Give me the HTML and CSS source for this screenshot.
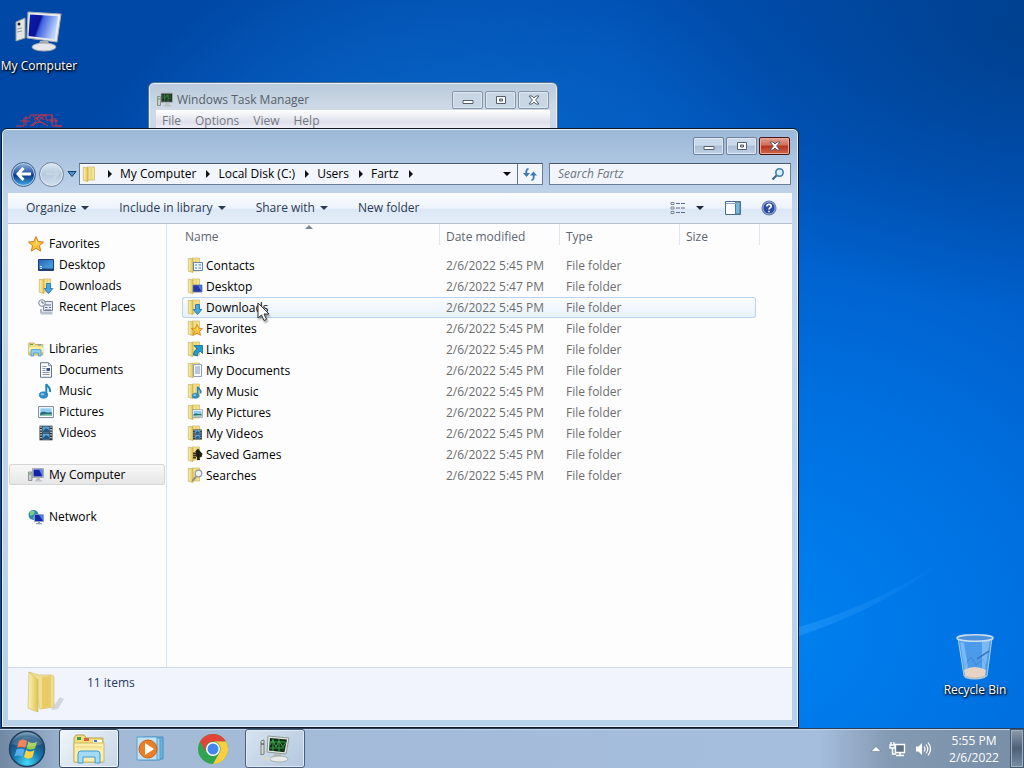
FILE: index.html
```html
<!DOCTYPE html>
<html lang="en">
<head>
<meta charset="utf-8">
<title>Fartz</title>
<link rel="stylesheet" href="styles.css">
</head>
<body>
<svg class="defs" aria-hidden="true">
  <defs>
    <linearGradient id="gold" x1="0" x2="1"><stop offset="0" stop-color="#fbf3b4"/><stop offset="1" stop-color="#e2c352"/></linearGradient>
    <linearGradient id="screen" x1="0" y1="0" x2="1" y2=".3"><stop offset="0" stop-color="#2a45d8"/><stop offset=".12" stop-color="#0b18a8"/><stop offset=".42" stop-color="#0a1496"/><stop offset=".5" stop-color="#3f5fe0"/><stop offset="1" stop-color="#b9d4fb"/></linearGradient>
    <linearGradient id="sky" x1="0" y1="0" x2="1" y2="1"><stop offset="0" stop-color="#2a62b8"/><stop offset="1" stop-color="#4fb0e8"/></linearGradient>
    <symbol id="folder" viewBox="0 0 16 16">
      <path d="M5 1h7.500v13H5z" fill="#f3e38e" stroke="#c9b055" stroke-width=".6"/>
      <path d="M1.300 1.300 6 2v13.500l-4.700-1.200z" fill="url(#gold)" stroke="#bfa34a" stroke-width=".6"/>
      <path d="M9 2v11.500" stroke="#e6cf70"/>
    </symbol>
    <symbol id="arrow-down" viewBox="0 0 16 16"><path d="M8.500 5.500h4v5h2.300l-4.300 5-4.300-5h2.300z" fill="#45a8e4" stroke="#1c6fb0" stroke-width=".8"/></symbol>
    <symbol id="star" viewBox="0 0 16 16"><path d="M8 .6l2.200 5 5.300.5-4 3.600 1.200 5.400L8 12.300l-4.700 2.800 1.200-5.400-4-3.600 5.300-.5z" fill="#fdc43c" stroke="#d27a14" stroke-width="1"/><path d="M8 3l1.300 3.600L8 9z" fill="#fff0a0"/></symbol>
    <symbol id="note" viewBox="0 0 16 16"><ellipse cx="5.500" cy="12" rx="4.200" ry="3.200" fill="#2f92cf" stroke="#1b6ea8" stroke-width=".6"/><path d="M8.300 12V1c1 2.500 4.700 3.200 3.600 8" fill="none" stroke="#2484c2" stroke-width="2"/><ellipse cx="4.500" cy="11.300" rx="1.800" ry="1" fill="#8fd0f0"/></symbol>
    <symbol id="doc" viewBox="0 0 16 16"><path d="M2.500.7h8l3 3v11.600h-11z" fill="#fbfcfe" stroke="#67758a"/><path d="M10.500.7v3h3M4.500 4.500h4M4.500 6.500h3M4.500 8.500h3M4.500 10.500h7M4.500 12.500h7" stroke="#8793a6" fill="none"/><path d="M8.500 6h3.500v3H8.500z" fill="#33518f"/></symbol>
    <symbol id="picture" viewBox="0 0 16 16"><path d="M.6 2.600h14.800v11H.6z" fill="#fff" stroke="#7b8794"/><path d="M2.300 4.300h11.400v7.600H2.300z" fill="#8fcdf0"/><path d="M2.300 9c4-3 6 1 11.400-1v3.900H2.300z" fill="#246a78"/><path d="M2.300 11c4-1 8-1 11.400-.5v1.400H2.300z" fill="#8bc7a9"/></symbol>
    <symbol id="film" viewBox="0 0 16 16"><path d="M1.500.7h13v14.600h-13z" fill="#2c3238"/><path d="M4.500 1.500h7v6h-7zM4.500 8.500h7v6h-7z" fill="#5ba4d6"/><path d="M5 6l3-3 3 2v2H5zM5 13l3-3 3 2v2H5z" fill="#225682"/><path d="M3 1.500v13M13 1.500v13" stroke="#e9eef2" stroke-width="1.400" stroke-dasharray="1.300 1.300"/></symbol>
    <symbol id="monitor" viewBox="0 0 16 16"><path d="M.5 5h3.500v8.500H.5z" fill="#c9ced2" stroke="#6f787f" stroke-width=".7"/><path d="M1 7h2" stroke="#55a54b"/><path d="M4.500 1.500h11v9h-11z" fill="#dfe4ea" stroke="#87909b" stroke-width=".7"/><path d="M5.500 2.500h9v7h-9z" fill="#1422a8"/><path d="M11 2.500h3.500v7z" fill="#6683e6"/><path d="M9 10.500h2.500l.7 2.500H8zM7 13.200h7v1.300H7z" fill="#b8bec8"/></symbol>
    <symbol id="taskmgr" viewBox="0 0 16 16"><path d="M.5 4.500h3v9h-3z" fill="#cbd2c8" stroke="#68736a" stroke-width=".7"/><path d="M1 7h2" stroke="#4ba546"/><path d="M4 1.200h11.500v9H4z" fill="#24342a" stroke="#a6b0ad" stroke-width=".8"/><path d="M5 7l2-2 1 2 2-4 2 4 2-1M5 4h9M7.500 2v8M11 2v8" stroke="#358c40" stroke-width=".6" fill="none"/><path d="M9 10.500h2.500l.7 2.500H8zM6.500 13h8v1.500h-8z" fill="#bac2bd"/></symbol>
    <symbol id="desk" viewBox="0 0 16 16"><path d="M.5 2.500h15v11H.5z" fill="url(#sky)" stroke="#1f3b74"/><path d="M1 11.500h14V13H1z" fill="#203f73"/><path d="M2 9h2v1H2zM2 11h2v1H2z" fill="#d6ebfc"/></symbol>
    <symbol id="dl" viewBox="0 0 16 16"><use href="#folder"/><use href="#arrow-down"/></symbol>
    <symbol id="recent" viewBox="0 0 16 16"><path d="M5.500 2.500h9v9h-9z" fill="#e4e9f2" stroke="#77849b"/><circle cx="4" cy="4" r="3.300" fill="#f5f7fa" stroke="#7b8798"/><path d="M4 2v2h2M7 6h6M7 8.500h2.500M11 8.500h2M7 11h6M3 10v4h11" stroke="#627089" fill="none"/><path d="M2.500 12.500h12v3h-12z" fill="#b8c0cd"/></symbol>
    <symbol id="lib" viewBox="0 0 16 16"><path d="M.8 2h5l1.500 1.500h7.500V14H.8z" fill="#f0dc82" stroke="#b6a04d" stroke-width=".8"/><path d="M2 3.500h3" stroke="#53aa51"/><path d="M10 4h3" stroke="#528dcc"/><path d="M1 6h14v5H1z" fill="#fbefaa"/><path d="M3 15v-5.500q0-1 1-1h8q1 0 1 1V15h-2.500v-3h-5v3z" fill="#8bd0f0" stroke="#4b95c6" stroke-width=".8"/></symbol>
    <symbol id="network" viewBox="0 0 16 16"><circle cx="5.500" cy="6" r="5" fill="#2988b8"/><path d="M2 3c2-2 4-1 5 0L5 6 2 7zM5 8l3-1 1 2-3 2z" fill="#77cf83"/><path d="M6.500 5.500h9v7h-9z" fill="#1028ad" stroke="#97a6c0" stroke-width=".8"/><path d="M11 6h4v6z" fill="#527be5"/><path d="M10 13h2v1h2v1.300H8V14h2z" fill="#8da0b5"/></symbol>
    <symbol id="tri" viewBox="0 0 8 8"><path d="M0 2h8L4 6z" fill="currentColor"/></symbol>
    <symbol id="chev" viewBox="0 0 6 8"><path d="M1 0l4 4-4 4z" fill="#111"/></symbol>
    <symbol id="min" viewBox="0 0 16 12"><path d="M3 6.500h10v3H3z" fill="#fff" stroke="#535d6e"/></symbol>
    <symbol id="max" viewBox="0 0 16 12"><path d="M3.500 2.500h9v7h-9z" fill="#fff" stroke="#535d6e"/><path d="M6.500 5h3v2h-3z" fill="#bdc9da" stroke="#535d6e"/></symbol>
    <symbol id="close" viewBox="0 0 16 12"><path d="M3 2h3l2 2 2-2h3l-3.400 4L13 10h-3L8 8l-2 2H3l3.400-4z" fill="#fff" stroke="#535d6e"/></symbol>
  </defs>
</svg>
<main class="desktop">
  <svg class="streaks" viewBox="0 0 1024 768" preserveAspectRatio="none" aria-hidden="true"><defs><linearGradient id="ray"><stop offset="0" stop-color="#4ab0ff" stop-opacity=".35"/><stop offset="1" stop-color="#4ab0ff" stop-opacity="0"/></linearGradient></defs><path d="M780 632Q870 610 950 556 880 612 780 642z" fill="url(#ray)"/></svg>

  <a class="shortcut computer" href="#computer">
    <svg width="48" height="48" viewBox="0 0 48 48"><path d="M1 13l9-4v20l-9 3z" fill="#e4e5e3" stroke="#9a9d9d"/><circle cx="4" cy="15" r="1.500" fill="#222"/><path d="M2 20l5-1M2 23l5-1" stroke="#999"/><path d="M13 3l33 2-4 28-30-4z" fill="#e9ebee" stroke="#a5abb4"/><path d="M15 5.500l28 1.700-3.500 23L13.500 27z" fill="url(#screen)"/><path d="M25 32h8l2 5H23z" fill="#aaafb7"/><ellipse cx="29" cy="38" rx="12" ry="4" fill="#e5e7ea" stroke="#a2a7ae"/></svg>
    <span>My Computer</span>
  </a>
  <div class="shortcut hidden-app">
    <svg width="46" height="30" viewBox="0 0 46 30" fill="none" stroke="#c0344c" stroke-width="1"><path d="M0 14h8V6h6V3h22v4h4v7h6M16 14L24 3h6v5h6v6h10M10 4v10M36 2v9M4 9h10M17 4l12 9M29 3L17 14M34 9h8M18 8q5-6 10 0M14 14q9-8 18 0"/></svg>
  </div>
  <a class="shortcut bin" href="#bin">
    <svg width="48" height="48" viewBox="0 0 48 48"><path d="M7 5h34l-5 38q-12 5-23 0z" fill="#8abcf0" fill-opacity=".55" stroke="#a5cef4"/><path d="M13 37q10-6 22 0l-1 6q-10 4-20 0z" fill="#e6d3c4"/><path d="M14 32l6-8 5 8 7-6 3 7" fill="none" stroke="#3d7bc0" opacity=".7"/><path d="M31 7h8l-5 30h-3zM9 9l4 1 4 24-3 5z" fill="#d8edff" opacity=".35"/><path d="M26 26l12-8" stroke="#326bb6" stroke-width="1.500"/><ellipse cx="24" cy="5" rx="18" ry="3.200" fill="#4d92dc" stroke="#c9dcee" stroke-width="1.500"/><path d="M13 42q11 5 22 0l-1 3q-10 3-20 0z" fill="#b9c3cc"/></svg>
    <span>Recycle Bin</span>
  </a>

  <section class="window taskmgr">
    <header class="caption">
      <svg width="16" height="16"><use href="#taskmgr"/></svg>
      <h2>Windows Task Manager</h2>
      <div class="controls">
        <button aria-label="Minimize"><svg width="16" height="12"><use href="#min"/></svg></button>
        <button aria-label="Maximize"><svg width="16" height="12"><use href="#max"/></svg></button>
        <button aria-label="Close"><svg width="16" height="12"><use href="#close"/></svg></button>
      </div>
    </header>
    <nav class="menubar"><button>File</button><button>Options</button><button>View</button><button>Help</button></nav>
  </section>

  <section class="window explorer">
    <header class="titlebar">
      <div class="controls">
        <button aria-label="Minimize"><svg width="16" height="12"><use href="#min"/></svg></button>
        <button aria-label="Maximize"><svg width="16" height="12"><use href="#max"/></svg></button>
        <button class="shut" aria-label="Close"><svg width="16" height="12"><use href="#close"/></svg></button>
      </div>
    </header>
    <div class="navrow">
      <div class="travel">
        <button aria-label="Back" class="round back"><svg width="16" height="14" viewBox="0 0 16 14"><path d="M7.500 1 2 7l5.500 6M2.500 7H15" fill="none" stroke="#fff" stroke-width="3"/></svg></button>
        <button aria-label="Forward" class="round forward"><svg width="16" height="14" viewBox="0 0 16 14"><path d="M8.500 1 14 7l-5.500 6M13.500 7H2" fill="none" stroke="#c7d6e6" stroke-width="2"/></svg></button>
        <button aria-label="Recent pages" class="recent"><svg width="10" height="8" viewBox="0 0 10 8"><path d="M1 1.500h8l-4 5z" fill="#4b93d5" stroke="#1b3e6b"/></svg></button>
      </div>
      <div class="address">
        <svg width="16" height="16"><use href="#folder"/></svg>
        <svg class="chev" width="6" height="8"><use href="#chev"/></svg><a href="#pc">My Computer</a>
        <svg class="chev" width="6" height="8"><use href="#chev"/></svg><a href="#c">Local Disk (C:)</a>
        <svg class="chev" width="6" height="8"><use href="#chev"/></svg><a href="#users">Users</a>
        <svg class="chev" width="6" height="8"><use href="#chev"/></svg><a href="#fartz">Fartz</a>
        <svg class="chev" width="6" height="8"><use href="#chev"/></svg>
        <button class="history" aria-label="Previous locations"><svg width="8" height="8"><use href="#tri"/></svg></button>
        <button class="refresh" aria-label="Refresh"><svg width="16" height="16" viewBox="0 0 16 16"><path d="M6.500 3Q3.500 3 4.500 8M9.500 14q3 0 2-5" fill="none" stroke="#3c78b4" stroke-width="1.800"/><path d="M1 7h7l-3.500 4zM8 9.500h7l-3.500-4z" fill="#3c78b4"/></svg></button>
      </div>
      <label class="search"><input type="text" placeholder="Search Fartz" aria-label="Search Fartz"><svg width="14" height="14" viewBox="0 0 14 14"><circle cx="8.500" cy="5.500" r="3.700" fill="#d8f0fc" stroke="#3f7cae" stroke-width="1.600"/><path d="M5.500 8.500l-4 4" stroke="#41658e" stroke-width="2.200"/></svg></label>
    </div>
    <div class="client">
      <div class="toolbar">
        <button>Organize <svg width="8" height="8"><use href="#tri"/></svg></button>
        <button>Include in library <svg width="8" height="8"><use href="#tri"/></svg></button>
        <button>Share with <svg width="8" height="8"><use href="#tri"/></svg></button>
        <button>New folder</button>
        <div class="tools">
          <button aria-label="Change view"><svg width="16" height="14" viewBox="0 0 16 14"><path d="M1 1.500h3v2H1zM1 6h3v2H1zM1 10.500h3v2H1z" fill="#fff" stroke="#7a8494"/><path d="M6 2.500h9M6 7h9M6 11.500h9" stroke="#5b6d8e" stroke-dasharray="4 1"/></svg></button>
          <button aria-label="More view options"><svg width="8" height="8"><use href="#tri"/></svg></button>
          <button class="pane" aria-label="Preview pane"><svg width="16" height="14" viewBox="0 0 16 14"><path d="M.5.5h15v13H.5z" fill="#fff" stroke="#4a6c91"/><path d="M10.500 1h4.500v12h-4.500z" fill="#72b9dc" stroke="#487aa2"/><path d="M1 2.500h14" stroke="#93a8bd"/></svg></button>
          <button aria-label="Help"><svg width="16" height="16" viewBox="0 0 16 16"><circle cx="8" cy="8" r="7.500" fill="#6980b4"/><circle cx="8" cy="8" r="6" fill="#2a4aa6" stroke="#b4c3e4" stroke-width=".7"/><path d="M5.800 6.500c0-3 4.400-2.700 4.400-.3C10.200 7.800 8 7.700 8 9.500M8 10.800V12.300" fill="none" stroke="#fff" stroke-width="1.600"/></svg></button>
        </div>
      </div>
      <div class="body">
        <nav class="sidebar">
          <ul>
            <li><a href="#fav"><svg width="16" height="16"><use href="#star"/></svg>Favorites</a></li>
            <li class="sub"><a href="#desk"><svg width="16" height="16"><use href="#desk"/></svg>Desktop</a></li>
            <li class="sub"><a href="#dl"><svg width="16" height="16"><use href="#dl"/></svg>Downloads</a></li>
            <li class="sub"><a href="#rec"><svg width="16" height="16"><use href="#recent"/></svg>Recent Places</a></li>
          </ul>
          <ul>
            <li><a href="#lib"><svg width="16" height="16"><use href="#lib"/></svg>Libraries</a></li>
            <li class="sub"><a href="#docs"><svg width="16" height="16"><use href="#doc"/></svg>Documents</a></li>
            <li class="sub"><a href="#music"><svg width="16" height="16"><use href="#note"/></svg>Music</a></li>
            <li class="sub"><a href="#pics"><svg width="16" height="16"><use href="#picture"/></svg>Pictures</a></li>
            <li class="sub"><a href="#vids"><svg width="16" height="16"><use href="#film"/></svg>Videos</a></li>
          </ul>
          <ul><li class="current"><a href="#pc"><svg width="16" height="16"><use href="#monitor"/></svg>My Computer</a></li></ul>
          <ul><li><a href="#net"><svg width="16" height="16"><use href="#network"/></svg>Network</a></li></ul>
        </nav>
        <div class="files">
          <table>
            <colgroup><col><col class="c-date"><col class="c-type"><col class="c-size"><col class="c-end"></colgroup>
            <thead><tr><th class="sorted">Name<svg width="8" height="4" viewBox="0 0 8 4"><path d="M0 4l4-4 4 4z" fill="#7b8794"/></svg></th><th>Date modified</th><th>Type</th><th colspan="2">Size</th></tr></thead>
            <tbody>
              <tr><td><svg width="16" height="16" viewBox="0 0 16 16"><use href="#folder"/><path d="M6.500 5.500h9v8h-9z" fill="#eef5fc" stroke="#6685ae"/><path d="M8 8h2M8 11h2M11.500 8H14M11.500 11H14" stroke="#4e80bc"/></svg>Contacts</td><td>2/6/2022 5:45 PM</td><td>File folder</td><td></td></tr>
              <tr><td><svg width="16" height="16" viewBox="0 0 16 16"><use href="#folder"/><path d="M6 7h9v7H6z" fill="#2238a8" stroke="#6d7fb0" stroke-width=".8"/><path d="M11 7.500h3.500v6z" fill="#5877d8"/></svg>Desktop</td><td>2/6/2022 5:47 PM</td><td>File folder</td><td></td></tr>
              <tr class="hot"><td><svg width="16" height="16"><use href="#dl"/></svg>Downloads</td><td>2/6/2022 5:45 PM</td><td>File folder</td><td></td></tr>
              <tr><td><svg width="16" height="16" viewBox="0 0 16 16"><use href="#folder"/><use href="#star" x="4" y="4" width="12" height="12"/></svg>Favorites</td><td>2/6/2022 5:45 PM</td><td>File folder</td><td></td></tr>
              <tr><td><svg width="16" height="16" viewBox="0 0 16 16"><use href="#folder"/><path d="M7 4.500h8.500v8L13 10q-3 2-2.500 5l-4-1Q6 10 10 8z" fill="#229bd0" stroke="#136b9d" stroke-width=".8"/></svg>Links</td><td>2/6/2022 5:45 PM</td><td>File folder</td><td></td></tr>
              <tr><td><svg width="16" height="16" viewBox="0 0 16 16"><use href="#folder"/><path d="M6.500 2.500h8v12h-8z" fill="#f5f8fc" stroke="#92a0b4"/><path d="M8 5h5M8 7h5M8 9h5M8 11h5" stroke="#7f98bc"/></svg>My Documents</td><td>2/6/2022 5:45 PM</td><td>File folder</td><td></td></tr>
              <tr><td><svg width="16" height="16" viewBox="0 0 16 16"><use href="#folder"/><use href="#note" x="4" y="3" width="13" height="13"/></svg>My Music</td><td>2/6/2022 5:45 PM</td><td>File folder</td><td></td></tr>
              <tr><td><svg width="16" height="16" viewBox="0 0 16 16"><use href="#folder"/><use href="#picture" x="5" y="4" width="11" height="11"/></svg>My Pictures</td><td>2/6/2022 5:45 PM</td><td>File folder</td><td></td></tr>
              <tr><td><svg width="16" height="16" viewBox="0 0 16 16"><use href="#folder"/><use href="#film" x="5" y="4" width="11" height="11"/></svg>My Videos</td><td>2/6/2022 5:45 PM</td><td>File folder</td><td></td></tr>
              <tr><td><svg width="16" height="16" viewBox="0 0 16 16"><use href="#folder"/><path d="M11 2.500l2 2.500 2.500 3-1 3-2 .5.5 2.500h-3v-3l-2-1 .5-5z" fill="#1f1b16"/><path d="M6 6h3v7H6z" fill="#8b7a45"/><path d="M6 7.500h3M6 9.500h3M6 11.500h3" stroke="#3b3220"/></svg>Saved Games</td><td>2/6/2022 5:45 PM</td><td>File folder</td><td></td></tr>
              <tr><td><svg width="16" height="16" viewBox="0 0 16 16"><use href="#folder"/><circle cx="11.500" cy="6.500" r="3.300" fill="#edf3f6" stroke="#9099a1" stroke-width="1.200"/><path d="M9 9.500l-3.500 4.500" stroke="#8b8d84" stroke-width="2"/></svg>Searches</td><td>2/6/2022 5:45 PM</td><td>File folder</td><td></td></tr>
            </tbody>
          </table>
          <svg class="cursor" width="13" height="20" viewBox="0 0 13 20"><path d="M1 1v15l3.500-3 2.500 5.500 2.500-1.200L7 12h5z" fill="#fff" stroke="#333"/></svg>
        </div>
      </div>
      <footer class="details">
        <svg width="42" height="42" viewBox="0 0 42 42"><path d="M26 36l7-10 4 2-6 10-7 1z" fill="#999fa8" opacity=".35"/><path d="M2 1l10 3 12 0q3 0 3 3v29l-14 2z" fill="#f0df93" stroke="#d2bb66" stroke-width=".6"/><path d="M15 6l9-1v31l-9 2z" fill="#e9cc68"/><path d="M2 1l9 8v32L1 37z" fill="url(#gold)" stroke="#cbb15a" stroke-width=".6"/></svg>
        <span>11 items</span>
      </footer>
    </div>
  </section>

  <footer class="taskbar">
    <button class="start" aria-label="Start"><svg width="38" height="38" viewBox="0 0 38 38"><defs><radialGradient id="orb" cx=".5" cy=".9" r=".9"><stop offset="0" stop-color="#42dcf8"/><stop offset=".45" stop-color="#1675ae"/><stop offset=".75" stop-color="#1c4d7c"/><stop offset="1" stop-color="#8fb5cc"/></radialGradient></defs><circle cx="19" cy="19" r="17.500" fill="url(#orb)" stroke="#243f5b" stroke-width="1.500"/><path d="M11 11q4-3 8 0l-2 7q-4-2-8 0z" fill="#f26a32"/><path d="M20.500 11.500q4 3 8.500 0l-2 7q-4 2-8.500 0z" fill="#9bcb45"/><path d="M8.500 19.500q4-2 8 0l-2 7q-4-2-8 0z" fill="#54aef0"/><path d="M18 20q4 3 8.500 0l-2 7q-4 3-8.500 0z" fill="#fcd142"/><path d="M4 14Q19 0 34 14 19 20 4 14z" fill="#fff" opacity=".18"/></svg></button>
    <button class="task active" aria-label="Windows Explorer"><svg width="34" height="32" viewBox="0 0 34 32"><path d="M2 5l2-3h8l2 3h17v24H2z" fill="#f1dc7e" stroke="#baa352"/><path d="M5 4h4v3H5z" fill="#3b9c4a"/><path d="M12 5h5v3h-5z" fill="#d8603d"/><path d="M21 7h9v3h-9z" fill="#fff"/><path d="M22 7h3v2h-3z" fill="#3a7cc9"/><path d="M2 10h30v19H2z" fill="#fbeeaa" stroke="#d0b865"/><path d="M4 14h26" stroke="#e5cf7d"/><path d="M6 30V21q0-3 3-3h16q3 0 3 3v9h-5v-6H11v6z" fill="#a3dbf6" stroke="#3f9bd3"/></svg></button>
    <button class="task" aria-label="Media Player"><svg width="30" height="28" viewBox="0 0 30 28"><path d="M7 2h20v22H7z" fill="#6fb4e0" stroke="#468ebd"/><path d="M4 3h20v22H4z" fill="#a3d2ee" stroke="#4e98c7"/><path d="M1 2h20v23H1z" fill="#c2e2f4" stroke="#559fcf"/><circle cx="12" cy="14" r="9" fill="#ee7e26" stroke="#c7651a"/><path d="M9 8l9 6-9 6z" fill="#fff"/></svg></button>
    <button class="task" aria-label="Chrome"><svg width="32" height="32" viewBox="0 0 32 32"><circle cx="16" cy="16" r="15" fill="#30a450"/><path d="M16 1a15 15 0 0 1 13 7.500H16a7.500 7.500 0 0 0-6.500 11.200L3 8.500A15 15 0 0 1 16 1z" fill="#e1453a"/><path d="M29 8.500A15 15 0 0 1 16 31l6.500-11.200A7.500 7.500 0 0 0 16 8.500z" fill="#fbce42"/><circle cx="16" cy="16" r="7" fill="#fff"/><circle cx="16" cy="16" r="5.500" fill="#4386ee"/></svg></button>
    <button class="task running" aria-label="Windows Task Manager"><svg width="32" height="30" viewBox="0 0 32 30"><path d="M2 7l3-1v14l-3 1z" fill="#d9ddda" stroke="#737c77"/><path d="M2 10h3" stroke="#333"/><path d="M9 2l21 2-3 16-19-2z" fill="#e2e8e5" stroke="#8e9994"/><path d="M11 4l17 1.600-2.600 12.600L10 16.500z" fill="#142c1a"/><path d="M11 11l3-5 3 7 3-6 4 6 3-5M11 14h14M11 8h15M14 5v12M20 5v13" fill="none" stroke="#35b04a" stroke-width=".9"/><path d="M15 20h7l1 3h-9z" fill="#b3bab7"/><ellipse cx="20" cy="25" rx="9" ry="3" fill="#e6eae8" stroke="#969e9a" stroke-width=".7"/><path d="M2 21l10 3-3 4-7-4z" fill="#d3d7d5"/></svg></button>
    <div class="tray">
      <div class="indicators">
        <button aria-label="Show hidden icons"><svg width="10" height="6" viewBox="0 0 10 6"><path d="M0 5.500l5-5 5 5z" fill="#fff" stroke="#54677f" stroke-width=".5"/></svg></button>
        <button aria-label="Network"><svg width="18" height="16" viewBox="0 0 18 16"><path d="M6.500 3.500h9v8h-9zM7 14.500h8M11 12v2" fill="#5f7184" stroke="#fff" stroke-width="1.400"/><path d="M2 1v3M5 1v3M1 4h5v3H1zM3.500 7v6H7" fill="none" stroke="#fff" stroke-width="1.400"/></svg></button>
        <button aria-label="Volume"><svg width="16" height="16" viewBox="0 0 16 16"><path d="M1 5.500h2.500L7 2v12l-3.500-3.500H1z" fill="#fff"/><path d="M9 5.500q2 2.500 0 5M11 3.500q3.500 4.500 0 9M13 1.500q5 6.500 0 13" fill="none" stroke="#fff" stroke-width="1.200"/></svg></button>
      </div>
      <button class="clock"><span>5:55 PM</span><span>2/6/2022</span></button>
      <button class="peek" aria-label="Show desktop"></button>
    </div>
  </footer>
</main>
</body>
</html>
```
FILE: styles.css
```css
* { box-sizing: border-box; }
body { margin: 0; font: 12px/16px "Open Sans", "Noto Sans", sans-serif; color: #111; }
button { margin: 0; padding: 0; border: 0; background: none; font: inherit; color: inherit; }
a { color: inherit; text-decoration: none; }
ul { list-style: none; margin: 0; padding: 0; }
svg { display: block; flex: none; }
.defs { position: absolute; width: 0; height: 0; }

.desktop { position: relative; height: 100vh; overflow: hidden; display: flex; flex-direction: column; justify-content: flex-end; background: radial-gradient(ellipse 34% 34% at 44% 24%, #0c6ecccc, #0c6ecc00), radial-gradient(ellipse 40% 36% at 100% 4%, #003a80b0, #003a8000), radial-gradient(ellipse 90% 100% at 74% 82%, #0082f2 0%, #0070e0 30%, #0058c2 62%, #0048a6 100%); }
.streaks { position: absolute; inset: 0; width: 100%; height: 100%; }

.shortcut { position: absolute; display: flex; flex-direction: column; align-items: center; gap: 1px; width: 76px; color: #fff; white-space: nowrap; text-shadow: 1px 1px 2px #000, 0 1px 3px #000; }
.computer { left: 1px; top: 9px; }
.hidden-app { left: 1px; top: 112px; }
.bin { right: 11px; bottom: 70px; }

.window { position: absolute; border: 1px solid #101a28; border-radius: 6px 6px 0 0; box-shadow: inset 0 0 0 1px #e6f1fb; }
.controls { display: flex; gap: 2px; margin-left: auto; }
.controls button { display: grid; place-items: center; width: 31px; height: 18px; border: 1px solid #6f819b; border-radius: 2px; background: linear-gradient(#cbdaea 45%, #a9bed6 50%, #bfd1e5); box-shadow: inset 0 0 0 1px #dce8f4; }
.controls .shut { border-color: #4a1512; background: linear-gradient(#e0a193, #cf6d58 45%, #b9301b 50%, #d06a4c); box-shadow: inset 0 0 0 1px #e6aa9c; }

.taskmgr { left: 148px; right: 466px; top: 82px; height: 80px; border-color: #50708f; padding: 7px 7px 0; background: linear-gradient(#b9cadb, #cfdae6 26px, #c4d2e2); color: #565f6b; }
.caption { display: flex; align-items: center; gap: 4px; padding: 0 1px; height: 20px; }
.caption h2 { margin: 0; font-size: 12px; font-weight: 400; }
.caption .controls button { background: #c9d6e3; border-color: #8493a5; }
.menubar { display: flex; gap: 14px; padding: 3px 6px; background: linear-gradient(#fff, #dfe0ec 12px, #f1f1f7 20px); color: #737780; }

.explorer { left: 1px; right: 225px; top: 128px; bottom: 40px; padding: 0 6px 7px; display: flex; flex-direction: column; background: linear-gradient(#9bb8d8, #bdd1e8 60px, #c6d7ea 90px, #b7d1ea); }
.titlebar { display: flex; height: 34px; padding: 8px 2px 0; }
.navrow { display: flex; align-items: center; height: 22px; margin-bottom: 8px; padding-right: 1px; }
.travel { display: flex; align-items: center; gap: 3px; width: 71px; padding-left: 3px; }
.round { display: grid; place-items: center; width: 25px; height: 25px; border-radius: 50%; border: 1px solid #45658c; }
.back { background: linear-gradient(#8fb4df, #204fa0 48%, #0b3583 52%, #3fb1ee); box-shadow: inset 0 0 0 1px #b4cdea; }
.forward { background: linear-gradient(#dce7f2, #b6c9dd 50%, #cfe0ee); border-color: #71839b; box-shadow: inset 0 0 0 1px #e3edf7; }
.address { flex: 1; display: flex; align-items: center; height: 22px; border: 1px solid #6a7f99; border-top-color: #49586b; background: #f2f6fc; padding-left: 2px; white-space: nowrap; color: #000; }
.address .chev { margin: 0 7px 0 9px; }
.history { display: grid; place-items: center; margin-left: auto; width: 20px; height: 20px; }
.refresh { display: grid; place-items: center; width: 25px; height: 20px; border-left: 1px solid #60758f; }
.search { display: flex; align-items: center; margin-left: 6px; width: 242px; height: 22px; border: 1px solid #6a7f99; border-top-color: #49586b; background: #f2f6fc; padding: 0 5px 0 8px; }
.search input { flex: 1; min-width: 0; border: 0; padding: 0; background: none; font: inherit; font-style: italic; }
.search input::placeholder { color: #6d747c; opacity: 1; }

.client { flex: 1; display: flex; flex-direction: column; min-height: 0; background: #fdfdfe; }
.toolbar { display: flex; align-items: center; gap: 30px; height: 31px; padding: 0 15px 0 18px; border-bottom: 1px solid #b3c0d0; background: linear-gradient(#fafcff, #edf3fc 50%, #dde8f6 54%, #e4edf8); color: #2b3a52; }
.toolbar button { display: flex; align-items: center; gap: 5px; white-space: nowrap; }
.tools { display: flex; align-items: center; margin-left: auto; gap: 10px; color: #1d293b; }
.tools .pane { margin: 0 10px 0 11px; }
.body { flex: 1; display: flex; min-height: 0; }
.sidebar { width: 159px; padding: 9px 1px 0; border-right: 1px solid #d6e3f2; display: flex; flex-direction: column; gap: 21px; color: #000; }
.sidebar a { display: flex; align-items: center; gap: 5px; height: 21px; padding-left: 19px; }
.sidebar .sub a { padding-left: 29px; }
.sidebar .current { border-radius: 3px; background: linear-gradient(#f8f8f8, #e6e6e7); box-shadow: inset 0 0 0 1px #d5d6d8; }
.files { flex: 1; position: relative; padding-left: 15px; }
table { width: 578px; table-layout: fixed; border-collapse: separate; border-spacing: 0; color: #6d6d6d; }
.c-date, .c-type { width: 120px; }
.c-size { width: 76px; }
.c-end { width: 4px; }
th { position: relative; padding: 5px 6px 0; border-right: 1px solid #e0e6ee; text-align: left; font-weight: 400; line-height: 16px; color: #5d6670; }
th:first-child { padding-left: 3px; }
.sorted svg { position: absolute; left: 48%; top: 1px; }
thead::after { content: ""; display: block; height: 10px; }
td { height: 21px; padding: 0 6px; line-height: 19px; border: solid transparent; border-width: 1px 0; }
td:first-child { padding-left: 4px; color: #000; border-left-width: 1px; border-radius: 3px 0 0 3px; }
td:nth-child(4) { border-right-width: 1px; border-radius: 0 3px 3px 0; }
td svg { float: left; margin: 1px 3px 0 0; }
.hot td { border-color: #b9d4ec; background: linear-gradient(#fafcfe, #e9f2fb); }
.cursor { position: absolute; left: 90px; top: 78px; filter: drop-shadow(1px 2px 1px #0006); }
.details { display: flex; height: 53px; padding: 3px 19px; gap: 18px; border-top: 1px solid #cfd9e8; background: #f1f4fd; color: #263a60; }
.details span { padding-top: 4px; }

.taskbar { position: relative; display: flex; height: 40px; border-top: 1px solid #2b3f57; box-shadow: inset 0 1px 0 #c2d3e6; background: linear-gradient(90deg, #7188a5, #a3bad6 7%, #a5bedd 80%, #8499b2 87%, #788da6); }
.start { width: 54px; padding-left: 8px; }
.task { display: grid; place-items: center; width: 60px; margin-left: 2px; border: 1px solid transparent; border-radius: 3px; }
.start + .task { margin-left: 5px; }
.active { border-color: #34485f; background: linear-gradient(135deg, #eff5fa, #c7d6e7); box-shadow: inset 0 0 0 1px #f1f7fc; }
.running { border-color: #4a607a; background: linear-gradient(135deg, #d7e3ef, #b3c7de); box-shadow: inset 0 0 0 1px #dfeaf5; }
.tray { display: flex; align-items: center; margin-left: auto; color: #fff; }
.indicators { display: flex; align-items: center; gap: 8px; padding-right: 7px; }
.clock { display: flex; flex-direction: column; width: 72px; line-height: 17px; text-align: center; }
.peek { align-self: stretch; width: 14px; border: 1px solid #465a70; background: linear-gradient(#8d9cac, #4c6077 50%, #788ea5); box-shadow: inset 0 0 0 1px #a1b0c0; }
```
